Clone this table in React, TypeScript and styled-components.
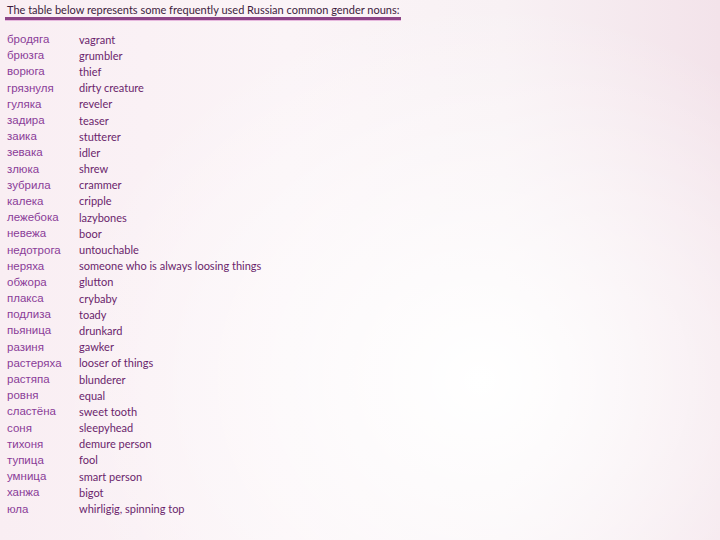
import React from "react";
import styled, { createGlobalStyle } from "styled-components";

const GlobalStyle = createGlobalStyle`
  html, body {
    margin: 0;
    padding: 0;
  }
  body {
    width: 720px;
    height: 540px;
    overflow: hidden;
  }
`;

const Page = styled.div`
  width: 720px;
  height: 540px;
  box-sizing: border-box;
  padding: 0 0 0 5px;
  background:
    radial-gradient(ellipse 420px 380px at 480px 380px, #ffffff 0%, rgba(255, 255, 255, 0) 100%),
    linear-gradient(90deg, #f9eef3 0%, #fbf4f7 40%, #f8f1f4 70%, #f3e3ea 100%);
`;

const Title = styled.div`
  display: inline-block;
  font-family: Lato, "Open Sans", sans-serif;
  font-size: 11px;
  line-height: 13px;
  color: #3d1c3d;
  padding: 1px 2px 1px 2px;
  border-bottom: 3px solid #8c4586;
  box-shadow: 0 1px 0 #e7b8de;
`;

const Table = styled.div`
  display: grid;
  grid-template-columns: 72px auto;
  grid-auto-rows: 16.2px;
  margin-top: 11px;
  padding-left: 2px;
  align-items: center;
`;

const Noun = styled.div`
  font-family: "Liberation Sans", Arial, sans-serif;
  font-size: 11.5px;
  color: #8a3c98;
  white-space: nowrap;
`;

const Meaning = styled.div`
  font-family: Lato, "Open Sans", sans-serif;
  font-size: 11px;
  color: #6a1f6c;
  white-space: nowrap;
`;

const nouns: [string, string][] = [
  ["бродяга", "vagrant"],
  ["брюзга", "grumbler"],
  ["ворюга", "thief"],
  ["грязнуля", "dirty creature"],
  ["гуляка", "reveler"],
  ["задира", "teaser"],
  ["заика", "stutterer"],
  ["зевака", "idler"],
  ["злюка", "shrew"],
  ["зубрила", "crammer"],
  ["калека", "cripple"],
  ["лежебока", "lazybones"],
  ["невежа", "boor"],
  ["недотрога", "untouchable"],
  ["неряха", "someone who is always loosing things"],
  ["обжора", "glutton"],
  ["плакса", "crybaby"],
  ["подлиза", "toady"],
  ["пьяница", "drunkard"],
  ["разиня", "gawker"],
  ["растеряха", "looser of things"],
  ["растяпа", "blunderer"],
  ["ровня", "equal"],
  ["сластёна", "sweet tooth"],
  ["соня", "sleepyhead"],
  ["тихоня", "demure person"],
  ["тупица", "fool"],
  ["умница", "smart person"],
  ["ханжа", "bigot"],
  ["юла", "whirligig, spinning top"],
];

export default function App() {
  return (
    <>
      <GlobalStyle />
      <Page>
        <Title>The table below represents some frequently used Russian common gender nouns:</Title>
        <Table>
          {nouns.map(([ru, en]) => (
            <React.Fragment key={ru}>
              <Noun>{ru}</Noun>
              <Meaning>{en}</Meaning>
            </React.Fragment>
          ))}
        </Table>
      </Page>
    </>
  );
}
